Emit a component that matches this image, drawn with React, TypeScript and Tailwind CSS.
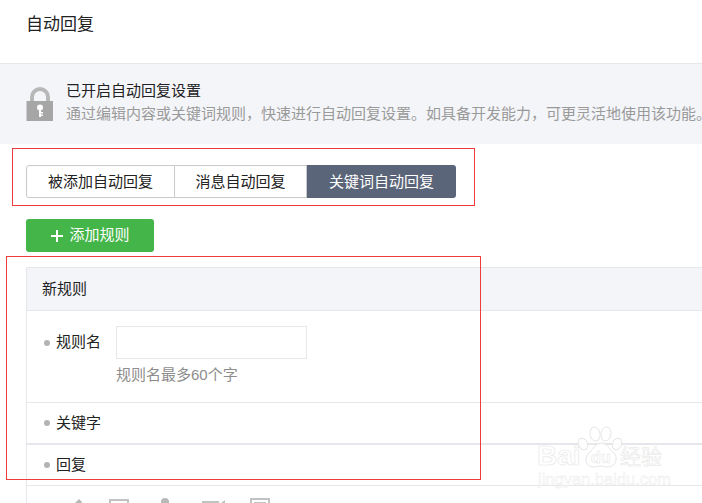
const font = { fontFamily: '"Liberation Sans","Noto Sans CJK SC",sans-serif' };

function Lock() {
  return (
    <svg width="28" height="37" viewBox="0 0 28 37" className="shrink-0">
      <path d="M6 17V11a8 8 0 0 1 16 0v6" fill="none" stroke="#b8b8b8" strokeWidth="4" />
      <rect x="0.5" y="15" width="26.5" height="20" fill="#a6a6a6" />
      <circle cx="14" cy="21.5" r="3" fill="#fff" />
      <rect x="13" y="23" width="2" height="8" fill="#fff" />
      <rect x="15" y="26" width="2" height="1.4" fill="#fff" />
      <rect x="15" y="28.5" width="2" height="1.4" fill="#fff" />
    </svg>
  );
}

function Dot() {
  return <span className="w-[6px] h-[6px] rounded-full bg-[#b4b4b4] shrink-0" />;
}

function Toolbar() {
  return (
    <div className="flex items-start h-[18px] pl-[18px] overflow-hidden">
      <svg width="240" height="18" viewBox="0 0 240 18" fill="none" stroke="#c2c2c2" strokeWidth="2">
        <path d="M29 6 l5-5 l3 3 l-1 2z" fill="#b8b8b8" stroke="none" />
        <rect x="65" y="2" width="18" height="16" />
        <circle cx="120" cy="4" r="4" fill="#b8b8b8" stroke="none" />
        <path d="M111 16 a9 7 0 0 1 18 0" fill="#b8b8b8" stroke="none" />
        <rect x="158" y="4" width="15" height="14" />
        <path d="M175 7 l4-3 v10" />
        <rect x="206" y="1" width="18" height="16" />
        <path d="M209 5 h12" />
      </svg>
    </div>
  );
}

function Watermark() {
  return (
    <div className="absolute left-[536px] top-[424px] w-[130px] h-[70px] pointer-events-none">
      <svg width="130" height="50" viewBox="0 0 130 50" className="absolute left-0 top-0" fill="#fff" fillOpacity="0.85" stroke="#e6e6e6" strokeWidth="1">
        <ellipse cx="59" cy="10" rx="5" ry="7" transform="rotate(-10 59 10)" />
        <ellipse cx="70" cy="10" rx="5" ry="7" transform="rotate(10 70 10)" />
        <ellipse cx="47" cy="20" rx="4.5" ry="6" transform="rotate(-25 47 20)" />
        <ellipse cx="81" cy="20" rx="4.5" ry="6" transform="rotate(25 81 20)" />
        <path d="M65 19c6 0 7 5 12 9 6 5 3 15-5 15-3 0-4-1-7-1s-4 1-8 1c-7 0-10-9-4-14 5-4 6-10 12-10z" />
      </svg>
      <span className="absolute left-[1px] top-[17px] text-[28px] leading-[30px] font-bold text-white/80 [-webkit-text-stroke:0.7px_#e8e8e8]">Bai</span>
      <span className="absolute left-[55px] top-[25px] text-[16px] leading-[18px] font-bold text-white/80 [-webkit-text-stroke:0.5px_#e4e4e4]">du</span>
      <span className="absolute left-[84px] top-[21px] text-[21px] leading-[24px] text-white/80 [-webkit-text-stroke:0.5px_#e4e4e4]">经验</span>
      <span className="absolute left-[2px] top-[46px] text-[16.5px] leading-[19px] whitespace-nowrap text-white/90 [-webkit-text-stroke:0.4px_#e8e8e8]">jingyan.baidu.com</span>
    </div>
  );
}

export default function App() {
  return (
    <div className="relative w-[702px] h-[503px] overflow-hidden bg-white text-[15px] text-[#222]" style={font}>
      <div className="h-[64px] border-b border-[#e7e7eb] pl-[26px] pt-[13px] text-[17px] leading-[23px]">自动回复</div>

      <div className="h-[80px] bg-[#f4f5f9] flex items-center pl-[26px] gap-[12px] whitespace-nowrap">
        <Lock />
        <div className="-mt-[3px]">
          <div className="leading-[20px] text-[#222]">已开启自动回复设置</div>
          <div className="leading-[20px] mt-[3px] text-[#9a9a9a]">通过编辑内容或关键词规则，快速进行自动回复设置。如具备开发能力，可更灵活地使用该功能。</div>
        </div>
      </div>

      <div className="flex ml-[26px] mt-[21px] w-[430px] h-[33px] leading-[31px] text-center">
        <div className="w-[149px] border border-[#c9c9c9] rounded-l-[3px]">被添加自动回复</div>
        <div className="w-[132px] border-y border-r border-[#c9c9c9]">消息自动回复</div>
        <div className="w-[149px] bg-[#5b6579] text-white rounded-r-[3px] leading-[33px]">关键词自动回复</div>
      </div>

      <div className="flex items-center justify-center gap-[5px] ml-[26px] mt-[21px] w-[128px] h-[33px] bg-[#44b549] text-white rounded-[3px]">
        <svg width="14" height="14" viewBox="0 0 14 14" stroke="#fff" strokeWidth="2"><path d="M7 1v12M1 7h12" /></svg>
        添加规则
      </div>

      <div className="ml-[26px] mt-[15px] border-l border-t border-[#e7e7eb]">
        <div className="h-[43px] bg-[#f4f5f9] border-b border-[#e7e7eb] pl-[15px] leading-[42px]">新规则</div>
        <div className="h-[92px] pt-[15px] border-b border-[#e7e7eb]">
          <div className="flex items-start">
            <div className="flex items-center gap-[6px] w-[89px] pl-[17px] h-[33px]">
              <Dot />
              <span>规则名</span>
            </div>
            <div>
              <div className="w-[191px] h-[33px] border border-[#e7e7eb]" />
              <div className="mt-[6px] leading-[20px] text-[#8d8d8d]">规则名最多60个字</div>
            </div>
          </div>
        </div>
        <div className="h-[42px] border-b-2 border-[#e7e7eb] flex items-center gap-[6px] pl-[17px]">
          <Dot />
          <span>关键字</span>
        </div>
        <div className="h-[41px] border-b border-[#e7e7eb] flex items-center gap-[6px] pl-[17px]">
          <Dot />
          <span>回复</span>
        </div>
        <div className="pt-[12px]"><Toolbar /></div>
      </div>

      <div className="absolute left-[12px] top-[148px] w-[463px] h-[58px] border border-[#ee3b3b]" />
      <div className="absolute left-[6px] top-[256px] w-[475px] h-[224px] border border-[#ee3b3b]" />
      <Watermark />
    </div>
  );
}
